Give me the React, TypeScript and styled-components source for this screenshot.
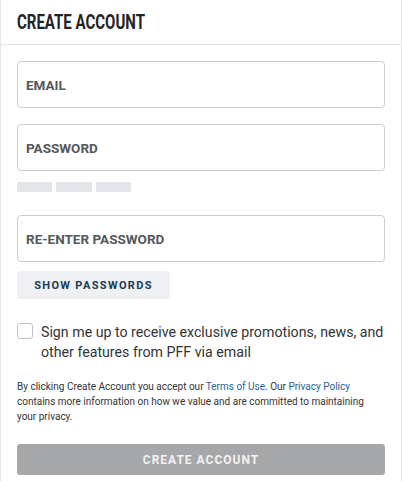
import React, { useState } from "react";
import styled, { createGlobalStyle } from "styled-components";

const GlobalStyle = createGlobalStyle`
  html, body {
    margin: 0;
    padding: 0;
    background: #ffffff;
  }
  * {
    box-sizing: border-box;
  }
`;

const Card = styled.div`
  width: 402px;
  min-height: 481px;
  background: #fff;
  border-left: 1px solid #e6e6e6;
  border-right: 1px solid #e6e6e6;
  font-family: Roboto, "Liberation Sans", sans-serif;
`;

const Header = styled.div`
  height: 45px;
  padding: 10px 16px 0;
  border-bottom: 1px solid #e6e6e6;

  h1 {
    display: inline-block;
    margin: 0;
    font-family: Roboto, "Liberation Sans", sans-serif;
    font-size: 20px;
    font-weight: bold;
    line-height: 24px;
    color: #222325;
    transform: scaleX(0.75);
    transform-origin: left center;
  }
`;

const Form = styled.form`
  display: flex;
  flex-direction: column;
  padding: 16px 16px 0;
`;

const Field = styled.div<{ $gap?: number }>`
  margin-top: ${(p) => p.$gap ?? 0}px;
  height: 47px;
  border: 1px solid #c9cdd2;
  border-radius: 4px;
  display: flex;
  align-items: center;
  padding: 0 8px;

  input {
    border: none;
    outline: none;
    width: 100%;
    font-family: Roboto, "Liberation Sans", sans-serif;
    font-size: 13.5px;
    font-weight: bold;
    color: #54575c;
    padding: 0;
    background: transparent;

    &::placeholder {
      color: #54575c;
      opacity: 1;
    }
  }
`;

const Strength = styled.div`
  display: flex;
  gap: 4px;
  margin-top: 11px;
`;

const Bar = styled.span`
  width: 35px;
  height: 10px;
  background: #e2e5ea;
`;

const ToggleButton = styled.button`
  align-self: flex-start;
  margin-top: 9px;
  width: 153px;
  height: 28px;
  border: none;
  border-radius: 3px;
  background: #eef0f3;
  color: #1c3a52;
  font-family: Roboto, "Liberation Sans", sans-serif;
  font-size: 11px;
  font-weight: bold;
  letter-spacing: 1.35px;
  padding: 0;
`;

const CheckRow = styled.label`
  display: flex;
  gap: 8px;
  margin-top: 23px;
  font-size: 14.2px;
  line-height: 20px;
  color: #333436;
`;

const Box = styled.span`
  flex: 0 0 16px;
  width: 16px;
  height: 16px;
  margin-top: 1px;
  border: 1px solid #bfc4ca;
  border-radius: 3px;
`;

const Legal = styled.p`
  margin: 17px 0 0;
  font-size: 10px;
  line-height: 15px;
  color: #333436;

  a {
    color: #1f6590;
    text-decoration: none;
  }
`;

const Submit = styled.button`
  margin-top: 20px;
  height: 31px;
  border: none;
  border-radius: 3px;
  background: #a6a7a9;
  color: #f2f2f2;
  font-family: Roboto, "Liberation Sans", sans-serif;
  font-size: 12px;
  font-weight: bold;
  letter-spacing: 1px;
`;

export default function App() {
  const [show, setShow] = useState(false);

  return (
    <>
      <GlobalStyle />
      <Card>
        <Header>
          <h1>CREATE ACCOUNT</h1>
        </Header>
        <Form onSubmit={(e) => e.preventDefault()}>
          <Field>
            <input placeholder="EMAIL" />
          </Field>
          <Field $gap={16}>
            <input type={show ? "text" : "password"} placeholder="PASSWORD" />
          </Field>
          <Strength>
            <Bar />
            <Bar style={{ width: 36 }} />
            <Bar />
          </Strength>
          <Field $gap={23}>
            <input
              type={show ? "text" : "password"}
              placeholder="RE-ENTER PASSWORD"
            />
          </Field>
          <ToggleButton type="button" onClick={() => setShow(!show)}>
            SHOW PASSWORDS
          </ToggleButton>
          <CheckRow>
            <Box />
            <span>
              Sign me up to receive exclusive promotions, news, and other
              features from PFF via email
            </span>
          </CheckRow>
          <Legal>
            By clicking Create Account you accept our <a href="#">Terms of Use</a>.
            Our <a href="#">Privacy Policy</a> contains more information on how we
            value and are committed to maintaining your privacy.
          </Legal>
          <Submit type="submit">CREATE ACCOUNT</Submit>
        </Form>
      </Card>
    </>
  );
}
